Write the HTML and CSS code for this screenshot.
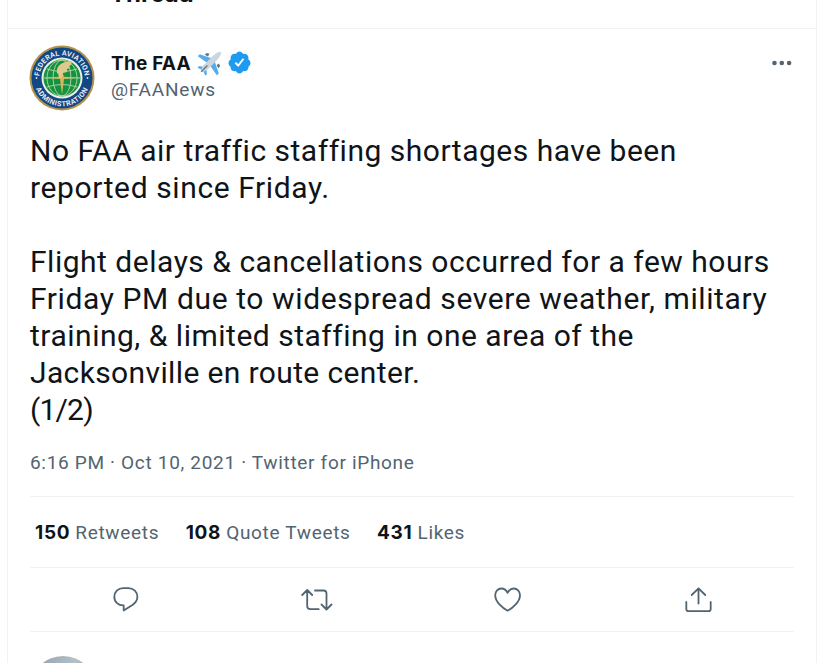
FILE: index.html
```html
<!DOCTYPE html>
<html lang="en">
<head>
  <meta charset="UTF-8">
  <meta name="viewport" content="width=device-width, initial-scale=1.0">
  <title>Thread</title>
  <link rel="stylesheet" href="styles.css">
</head>
<body>
  <main class="column">
    <header class="topbar">
      <h1 class="topbar-title">Thread</h1>
    </header>

    <article class="tweet">
      <div class="author">
        <svg class="avatar" viewBox="0 0 66 66" aria-label="The FAA">
          <defs>
            <path id="sealTop" d="M10.4 33a22.600 22.600 0 0 1 45.200 0"/>
            <path id="sealBottom" d="M4.700 33a28.300 28.300 0 0 0 56.600 0"/>
          </defs>
          <circle cx="33" cy="33" r="32.500" fill="#b3924c"/>
          <circle cx="33" cy="33" r="30.500" fill="#124684"/>
          <circle cx="33" cy="33" r="20.500" fill="#e9efe3"/>
          <circle cx="33" cy="33" r="18.500" fill="#16913f"/>
          <g fill="none" stroke="#b4d8a8" stroke-width=".9">
            <ellipse cx="33" cy="33" rx="9" ry="18"/>
            <ellipse cx="33" cy="33" rx="15" ry="18"/>
            <path d="M18 24q15 5 30 0M18 42q15-5 30 0M15 33h36"/>
          </g>
          <path d="M14 32.600l17-.8 2-6 2 6 17 .8-17 1.400-2 16-2-16z" fill="#d5b65f"/>
          <path d="M28 29c-1-8 3-12 15-13l-1 4-2 1 1 2-3 1v3l-4 1-1 5h-3l-1-5z" fill="#dfc98e"/>
          <g class="seal-text">
            <text><textPath href="#sealTop" startOffset="50%">FEDERAL AVIATION</textPath></text>
            <text class="seal-bottom"><textPath href="#sealBottom" startOffset="50%">ADMINISTRATION</textPath></text>
          </g>
          <circle cx="7.500" cy="33" r=".9" fill="#dfe7ee"/>
          <circle cx="58.500" cy="33" r=".9" fill="#dfe7ee"/>
        </svg>
        <div class="names">
          <div class="name">
            <span class="display-name">The FAA</span>
            <svg class="plane" viewBox="0 0 24 24">
              <path d="M14 7L2.500 3 .8 5l9.200 6.500zM17 10l4 11.500-2 1.700-6.500-9.200z" fill="#55acee"/>
              <path d="M8 15.500l-6-1L.5 16l5 2.500 2.500 5 1.500-1-.5-6z" fill="#55acee"/>
              <path d="M7.500 3.500l1.600-1.600 2.900.8-1.500 2.500zM20.500 16.500l1.600-1.600-.8-2.900-2.500 1.500z" fill="#66757f"/>
              <path d="M21 1c1.500-.8 2.800.3 2 2-1 3-3.500 5.500-6 8l-7 7-5 2.500-1.500-1.500L6 14l7-7c2.500-2.500 5-5 8-6z" fill="#ccd6dd"/>
              <path d="M4 20l6-6" stroke="#66757f" stroke-width="1.300"/>
            </svg>
            <svg class="verified" viewBox="0 0 24 24">
              <path d="M22.500 12.500c0-1.580-.875-2.950-2.148-3.600.154-.435.238-.905.238-1.400 0-2.210-1.710-3.998-3.818-3.998-.47 0-.92.084-1.336.250C14.818 2.415 13.510 1.500 12 1.500s-2.816.917-3.437 2.250c-.415-.165-.866-.250-1.336-.250-2.110 0-3.818 1.790-3.818 4 0 .494.083.964.237 1.400-1.272.650-2.147 2.018-2.147 3.600 0 1.495.782 2.798 1.942 3.486-.020.170-.032.340-.032.514 0 2.210 1.708 4 3.818 4 .470 0 .920-.086 1.335-.250.620 1.334 1.926 2.250 3.437 2.250 1.512 0 2.818-.916 3.437-2.250.415.163.865.248 1.336.248 2.110 0 3.818-1.790 3.818-4 0-.174-.012-.344-.033-.513 1.158-.687 1.943-1.990 1.943-3.484z" fill="#1d9bf0"/>
              <path d="M8 12.200l2.800 2.700 5-6.500" fill="none" stroke="#fff" stroke-width="1.800"/>
            </svg>
          </div>
          <div class="handle">@FAANews</div>
        </div>
        <svg class="more" viewBox="0 0 20 6">
          <circle cx="2.500" cy="3" r="2.300"/><circle cx="9.800" cy="3" r="2.300"/><circle cx="17.100" cy="3" r="2.300"/>
        </svg>
      </div>

      <div class="tweet-text">
        <p><span class="snug">No FAA air traffic staffing shortages have been</span><br>reported since Friday.</p>
        <p><span class="snug">Flight delays &amp; cancellations occurred for a few hours</span><br>Friday PM due to widespread severe weather, military<br><span class="snug">training, &amp; limited staffing in one area of the</span><br><span class="tight">Jacksonville en route center.</span><br><span class="count">(1/2)</span></p>
      </div>

      <div class="meta">6:16 PM · Oct 10, 2021 · Twitter for iPhone</div>

      <div class="stats">
        <div class="stat"><b>150</b><span>Retweets</span></div>
        <div class="stat"><b>108</b><span>Quote Tweets</span></div>
        <div class="stat"><b>431</b><span>Likes</span></div>
      </div>

      <div class="actions">
        <svg viewBox="0 0 28 28"><path d="M11.200 2.200h5.200c5.200 0 9 3.800 9 8.500 0 3.700-2 6.200-5 8.200l-8.700 5.500v-5c-5.400.2-9.400-3.400-9.400-8.600 0-4.800 3.800-8.600 8.900-8.600z"/></svg>
        <svg class="retweet" viewBox="0 0 32 28"><path d="M1.200 9l5-5 5 5M6.200 4.500V20q0 3.200 3.200 3.200h8.300M14 4.500h8.500q3 0 3 3V23M20.500 18.500l5 5 5-5"/></svg>
        <svg viewBox="0 0 28 28"><path d="M13.600 24.700C9.100 22.500 1.200 16 1.200 9.200c0-4 2.900-6.700 6.200-6.700 2.700 0 4.900 1.600 6.200 4.300 1.300-2.700 3.500-4.300 6.200-4.300 3.300 0 6.200 2.700 6.200 6.700 0 6.800-7.900 13.300-12.400 15.500z"/></svg>
        <svg viewBox="0 0 28 28"><path d="M13.500 17.500V2.500M6.700 9l6.800-6.700L20.300 9M1.300 16v7q0 2.200 2.200 2.200h20q2.200 0 2.200-2.200v-7"/></svg>
      </div>
    </article>

    <div class="reply">
      <div class="reply-avatar"></div>
    </div>
  </main>
</body>
</html>
```
FILE: styles.css
```css
* {
  box-sizing: border-box;
}
body {
  margin: 0;
  height: 663px;
  overflow: hidden;
  background: #fff;
  color: #0f1419;
  font-family: Roboto, "Liberation Sans", sans-serif;
  font-size: 19px;
  letter-spacing: .68px;
}
.column {
  width: 810px;
  height: 663px;
  margin-left: 7px;
  border: 1px solid #eff3f4;
  border-width: 0 1px;
  overflow: hidden;
}
.topbar {
  display: flex;
  height: 29px;
  padding-left: 102px;
  border-bottom: 1px solid #eff3f4;
}
.topbar-title {
  margin: -20px 0 0;
  font-family: Inter, sans-serif;
  font-size: 24px;
  line-height: 28px;
  font-weight: 700;
  letter-spacing: 0;
}
.tweet {
  padding: 16px 22px 0;
}
.author {
  display: flex;
  height: 66px;
}
.avatar {
  width: 66px;
  height: 66px;
  margin-left: -1px;
}
.seal-text {
  fill: #e4ebf2;
  font-size: 7.2px;
  font-weight: 700;
  letter-spacing: .15px;
  text-anchor: middle;
}
.seal-bottom {
  letter-spacing: .5px;
}
.names {
  flex: 1;
  padding: 5px 0 0 16px;
}
.name {
  display: flex;
  align-items: center;
  height: 26px;
  font-family: Inter, sans-serif;
  font-weight: 700;
  letter-spacing: .2px;
}
.plane {
  width: 25px;
  height: 25px;
  margin-left: 6px;
}
.verified {
  width: 25px;
  height: 25px;
  margin: -1px 0 0 5px;
}
.handle {
  line-height: 28px;
  color: #536471;
  letter-spacing: .8px;
}
.more {
  width: 20px;
  height: 6px;
  margin: 15px 2px 0 0;
  fill: #536471;
}
.tweet-text {
  padding-top: 21px;
  font-size: 30px;
  line-height: 37px;
  letter-spacing: .61px;
  white-space: nowrap;
}
.tweet-text p {
  margin: 0 0 37px;
}
.tweet-text p:last-child {
  margin: 0;
}
.snug {
  letter-spacing: .51px;
}
.tight {
  letter-spacing: .37px;
}
.count {
  letter-spacing: -.8px;
}
.meta {
  height: 69px;
  padding-top: 22px;
  border-bottom: 1px solid #eff3f4;
  color: #536471;
  line-height: 26px;
}
.stats {
  display: flex;
  align-items: center;
  gap: 26.5px;
  height: 71px;
  padding-left: 5px;
  border-bottom: 1px solid #eff3f4;
  color: #536471;
}
.stat {
  display: flex;
  align-items: baseline;
  gap: 5px;
}
.stat b {
  color: #0f1419;
  font-family: Inter, sans-serif;
  letter-spacing: .7px;
}
.actions {
  display: flex;
  justify-content: space-around;
  height: 64px;
  padding-top: 18px;
  border-bottom: 1px solid #eff3f4;
}
.actions svg {
  width: 28px;
  height: 28px;
  fill: none;
  stroke: #536471;
  stroke-width: 1.8;
  stroke-linecap: round;
  stroke-linejoin: round;
}
.actions .retweet {
  width: 32px;
  margin: 0 -2px;
}
.reply {
  padding: 24px 22px;
}
.reply-avatar {
  width: 66px;
  height: 66px;
  border-radius: 50%;
  background: linear-gradient(100deg, #9daab3 20%, #b4bfc6 60%, #98a4ac);
}
```
